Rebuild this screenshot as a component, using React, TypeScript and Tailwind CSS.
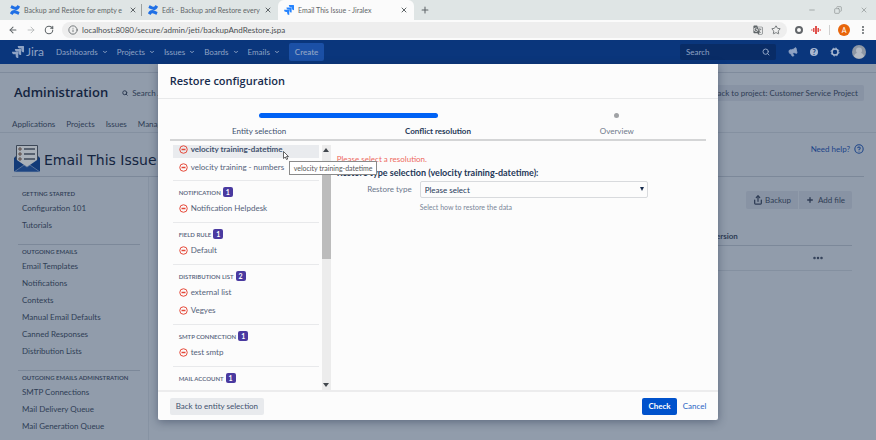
import {
  ArrowLeft,
  ArrowRight,
  ChevronDown,
  CircleHelp,
  Copy,
  Ellipsis,
  EllipsisVertical,
  Info,
  Megaphone,
  Minus,
  Plus,
  RotateCw,
  Search,
  Share,
  Star,
  X,
} from "lucide-react";
import { SiConfluence, SiJira } from "react-icons/si";
import { MdGTranslate } from "react-icons/md";

const tabs = [
  { title: "Backup and Restore for empty e", active: false },
  { title: "Edit - Backup and Restore every", active: false },
  { title: "Email This Issue - Jiralex", active: true },
];

const sidebar = [
  { heading: "GETTING STARTED", links: ["Configuration 101", "Tutorials"] },
  {
    heading: "OUTGOING EMAILS",
    links: [
      "Email Templates",
      "Notifications",
      "Contexts",
      "Manual Email Defaults",
      "Canned Responses",
      "Distribution Lists",
    ],
  },
  {
    heading: "OUTGOING EMAILS ADMINSTRATION",
    links: ["SMTP Connections", "Mail Delivery Queue", "Mail Generation Queue"],
  },
];

const entityGroups = [
  { heading: "NOTIFICATION", items: ["Notification Helpdesk"] },
  { heading: "FIELD RULE", items: ["Default"] },
  { heading: "DISTRIBUTION LIST", items: ["external list", "Vegyes"] },
  { heading: "SMTP CONNECTION", items: ["test smtp"] },
  { heading: "MAIL ACCOUNT", items: [""] },
];

const BrowserChrome = () => (
  <div className="shrink-0 bg-[#dfe5e5] text-[#5f6568]">
    <div className="flex h-5 items-stretch">
      {tabs.map((tab, index) => (
        <div
          key={tab.title}
          className={
            tab.active
              ? "flex w-[136px] items-center gap-1 rounded-t-md bg-[#fbfbfb] px-1.5"
              : "flex w-[136px] items-center gap-1 pr-1.5 pl-1.5 first:w-[142px] first:pr-0 first:pl-2.5"
          }
        >
          {tab.active ? (
            <SiJira className="size-2.5 shrink-0 text-[#2684ff]" />
          ) : (
            <SiConfluence className="size-2.5 shrink-0 text-[#1f6fe5]" />
          )}
          <span className="min-w-0 flex-1 text-[7px] whitespace-nowrap">{tab.title}</span>
          <button aria-label="Close tab">
            <X className="size-2" strokeWidth={3} />
          </button>
          {index === 0 && <span className="h-3 w-px bg-[#9aa0a0]" />}
        </div>
      ))}
      <button aria-label="New tab" className="px-1.5">
        <Plus className="size-2.5" strokeWidth={2.5} />
      </button>
      <div className="ml-auto flex items-center gap-4.5 pr-2 text-[#8a9090]">
        <button aria-label="Minimize"><Minus className="size-2" /></button>
        <button aria-label="Restore window"><Copy className="size-2 -scale-x-100" /></button>
        <button aria-label="Close window"><X className="size-2" /></button>
      </div>
    </div>
    <div className="flex h-5 items-center gap-2 bg-[#fbfbfb] px-2">
      <button aria-label="Back"><ArrowLeft className="size-2.5" strokeWidth={2.5} /></button>
      <button aria-label="Forward" className="text-[#b0b3b5]"><ArrowRight className="size-2.5" /></button>
      <button aria-label="Reload"><RotateCw className="size-2.5" strokeWidth={2.5} /></button>
      <div className="flex h-4 flex-1 items-center gap-1 rounded-full bg-[#eeeeee] px-1.5">
        <Info className="size-2.5" />
        <input
          aria-label="Address"
          defaultValue="localhost:8080/secure/admin/jeti/backupAndRestore.jspa"
          className="min-w-0 flex-1 bg-transparent text-[8px] text-[#4a4f52] outline-none"
        />
        <MdGTranslate className="mr-1 size-2.5" />
        <Star className="size-2.5" />
      </div>
      <span className="size-2 rounded-full border-2 border-[#62666a]" />
      <svg viewBox="0 0 20 16" className="h-2 w-2.5" fill="#e0504b">
        <path d="M0 7h3v2H0ZM4 4h3v8H4ZM8 0h4v16H8ZM13 4h3v8h-3ZM17 7h3v2h-3Z" />
      </svg>
      <span className="h-2.5 w-px bg-[#d0d0d0]" />
      <span className="flex size-3 items-center justify-center rounded-full bg-[#e8660c] text-[7px] text-white">
        A
      </span>
      <button aria-label="Browser menu"><EllipsisVertical className="size-2.5" strokeWidth={3} /></button>
    </div>
  </div>
);

const JiraHeader = () => (
  <header className="flex h-6 shrink-0 items-center bg-[#0a367c] pr-2.5 pl-3 text-[#8fa3c4]">
    <a href="#" className="flex items-center gap-0.5 text-[12px]">
      <SiJira className="size-3" />
      Jira
    </a>
    <nav className="ml-3 flex items-center gap-[9px]">
      {["Dashboards", "Projects", "Issues", "Boards", "Emails"].map((name) => (
        <button key={name} className="flex items-center gap-1 text-[8px]">
          {name}
          <ChevronDown className="size-1.5" strokeWidth={4} />
        </button>
      ))}
      <button className="h-[18px] rounded-xs bg-[#1b50a6] px-1.5 text-[8px] font-semibold">
        Create
      </button>
    </nav>
    <div className="ml-auto flex items-center gap-3">
      <label className="flex h-4 w-24 items-center rounded-xs bg-[#092c66] px-1.5">
        <input
          aria-label="Search"
          placeholder="Search"
          className="min-w-0 flex-1 bg-transparent text-[8px] outline-none placeholder:text-[#8fa3c4]"
        />
        <Search className="size-2" strokeWidth={3} />
      </label>
      <button aria-label="Feedback">
        <Megaphone className="size-2.5 -rotate-12 fill-current" />
      </button>
      <button
        aria-label="Help"
        className="flex size-2 items-center justify-center rounded-full bg-[#a9b8d0] text-[7px] font-bold text-[#0a367c]"
      >
        ?
      </button>
      <button aria-label="Settings">
        <svg viewBox="0 0 20 20" className="size-2.5" fill="none" stroke="#a9b8d0">
          <circle cx="10" cy="10" r="6" strokeWidth="3" />
          <circle cx="10" cy="10" r="8" strokeWidth="2" strokeDasharray="3.140 3.140" />
        </svg>
      </button>
      <button aria-label="Profile">
        <svg viewBox="0 0 28 28" className="size-3.5">
          <circle cx="14" cy="14" r="14" fill="#8e97a5" />
          <circle cx="14" cy="11" r="6" fill="#b4bac4" />
          <path d="M4 23a10 8 0 0 1 20 0 14 14 0 0 1-20 0Z" fill="#b4bac4" />
        </svg>
      </button>
    </div>
  </header>
);

const EnvelopeLogo = () => (
  <svg viewBox="0 0 26 28" className="h-7 w-[26px]">
    <path d="M0 13 4 9v10h18V9l4 4v14H0Z" fill="#173a70" />
    <path d="M2.500.5h21V18L13 26 2.500 18Z" fill="#a9b0b8" stroke="#3c4757" />
    <path d="M5 3h2v2H5ZM5 8h2v2H5ZM5 13h2v2H5Z" fill="none" stroke="#5b4a45" />
    <path d="M10 4h11M10 9h11M10 14h11" stroke="#3c4757" strokeWidth="1.500" />
    <path d="M0 13v14h26V13L13 22Z" fill="#123a78" />
    <path d="m0 27 10-7 3 2 3-2 10 7Z" fill="#1d4583" stroke="#8593aa" strokeWidth=".6" />
  </svg>
);

const AdminPage = () => (
  <div className="flex min-h-0 flex-1 flex-col overflow-hidden bg-[#919cab] text-[#2f3d55]">
    <div className="h-[9px] shrink-0 border-b border-[#7f8b9c]" />
    <div className="flex h-10 shrink-0 items-center pr-3 pl-3.5">
      <h1 className="font-['Open_Sans'] text-[13px] font-semibold text-[#14243f]">Administration</h1>
      <button className="ml-3.5 flex items-center gap-1 text-[8px]">
        <Search className="size-1.5" strokeWidth={4} />
        Search Jira admin
      </button>
      <button className="ml-auto h-4 rounded-xs bg-[#8893a4] px-1.5 text-[8px]">
        Back to project: Customer Service Project
      </button>
    </div>
    <nav className="flex h-5 shrink-0 items-center gap-[11px] border-b border-[#8490a0] pt-0.5 pl-3 text-[8px]">
      {["Applications", "Projects", "Issues", "Manage apps"].map((name) => (
        <a key={name} href="#">{name}</a>
      ))}
    </nav>
    <div className="mx-3 flex h-11 shrink-0 items-center gap-1 border-b border-[#7c8899] pt-2 pl-0.5">
      <EnvelopeLogo />
      <h2 className="pt-1 font-['DejaVu_Sans'] text-[14px] text-[#14243f]">Email This Issue</h2>
      <a href="#" className="ml-auto flex items-center gap-1 self-start pt-0.5 text-[8px] text-[#1c4489]">
        Need help?
        <CircleHelp className="size-2.5" strokeWidth={2.5} />
      </a>
    </div>
    <div className="flex min-h-0 flex-1 pr-6">
      <aside className="w-[149px] shrink-0 border-r border-[#8793a3] pt-2 pr-2 pl-4.5">
        {sidebar.map((group, index) => (
          <div
            key={group.heading}
            className={index > 0 ? "border-t border-[#7c8899] pb-2.5 pl-1" : "pt-0.5 pb-2.5 pl-1"}
          >
            <h3 className="text-[6px] leading-[13px] font-semibold whitespace-nowrap">{group.heading}</h3>
            {group.links.map((link) => (
              <a key={link} href="#" className="block text-[8px] leading-[17px]">{link}</a>
            ))}
          </div>
        ))}
      </aside>
      <main className="flex-1 pt-3.5 pl-4">
        <div className="flex justify-end gap-px">
          <button className="flex h-[18px] items-center gap-0.5 rounded-l-xs bg-[#8893a4] px-[7px] text-[8px]">
            <Share className="size-2.5" strokeWidth={3} />
            Backup
          </button>
          <button className="flex h-[18px] items-center gap-1 rounded-r-xs bg-[#8893a4] px-[7px] text-[8px]">
            <Plus className="size-2" strokeWidth={4} />
            Add file
          </button>
        </div>
        <table className="mt-4.5 w-full table-fixed text-left text-[8px]">
          <thead>
            <tr className="h-[18px] border-b border-[#7c8899]">
              <th />
              <th className="w-[141px]">Version</th>
            </tr>
          </thead>
          <tbody>
            <tr className="h-[25px] border-b border-[#8490a0]">
              <td />
              <td>
                <button aria-label="Row actions" className="ml-auto block pr-7">
                  <Ellipsis className="size-3" strokeWidth={3} />
                </button>
              </td>
            </tr>
          </tbody>
        </table>
      </main>
    </div>
  </div>
);

const EntityRow = ({ name, selected = false }: { name: string; selected?: boolean }) => (
  <button
    className={
      selected
        ? "flex h-[18px] w-full items-center gap-[3px] bg-[#e9ebee] pl-1.5 text-[8px] font-bold text-[#42526e]"
        : "flex h-[18px] w-full items-center gap-[3px] pl-1.5 text-[8px] text-[#54627a]"
    }
  >
    <svg viewBox="0 0 18 18" className="size-[9px] shrink-0" fill="none" stroke="#e5493a" strokeWidth="2">
      <circle cx="9" cy="9" r="7.500" />
      <path d="M5 9h8" strokeWidth="3" />
    </svg>
    {name}
  </button>
);

const EntityList = () => (
  <div className="relative flex w-[158px] shrink-0 gap-[3px]">
    <div className="h-full min-w-0 flex-1 overflow-hidden">
      <div className="-mt-[5px] pb-1">
        <EntityRow name="velocity training-datetime" selected />
        <EntityRow name="velocity training - numbers" />
      </div>
      {entityGroups.map((group) => (
        <div key={group.heading} className="border-t border-[#e8e9eb] pt-1 pb-[5px]">
          <h3 className="flex h-3.5 items-center gap-0.5 pl-1.5 text-[6px] font-semibold text-[#54627a]">
            {group.heading}
            <span className="flex size-2.5 items-center justify-center rounded-xs bg-[#4a3aa0] text-[7px] font-bold text-white">
              {group.items.length}
            </span>
          </h3>
          {group.items.map((item) => (
            <EntityRow key={item} name={item} />
          ))}
        </div>
      ))}
    </div>
    <div className="flex h-full w-[9px] flex-col items-center bg-[#ececec] py-[3px]">
      <svg viewBox="0 0 6 4" className="h-1 w-1.5 shrink-0" fill="#42474d"><path d="M0 4h6L3 0Z" /></svg>
      <div className="mt-2.5 h-[97px] w-full bg-[#bcbcbc]" />
      <svg viewBox="0 0 6 4" className="mt-auto h-1 w-1.5 shrink-0" fill="#42474d"><path d="M0 0h6L3 4Z" /></svg>
    </div>
    <span
      role="tooltip"
      className="absolute top-4 left-[116px] z-10 flex h-3.5 items-center border border-[#8a8a8a] bg-white px-1 text-[7px] whitespace-nowrap text-[#575757]"
    >
      velocity training-datetime
    </span>
    <svg viewBox="0 0 12 18" className="absolute top-1.5 left-[110px] z-20 h-[9px] w-1.5">
      <path d="M1 1v14l3.500-3 2.500 5 2.500-1-2.500-5H11Z" fill="#fff" stroke="#333" strokeWidth="1.500" />
    </svg>
  </div>
);

const RestoreDialog = () => (
  <div
    role="dialog"
    aria-labelledby="restore-title"
    className="absolute top-16 bottom-5 left-[18%] flex w-[64%] flex-col rounded-b-xs bg-[#fcfcfc] text-[#42526e] shadow-[0_2px_10px_rgba(30,45,70,0.45)]"
  >
    <div className="flex h-[35px] shrink-0 items-center border-b border-[#e8e9ea] px-3">
      <h2 id="restore-title" className="font-['Open_Sans'] text-[11px] font-semibold text-[#172b4d]">
        Restore configuration
      </h2>
    </div>
    <div className="flex min-h-0 flex-1 flex-col px-3 pt-3.5">
      <div className="grid h-1 shrink-0 grid-cols-6 items-center">
        <div className="col-span-2 col-start-2 h-[5px] rounded-full bg-[#0062f5]" />
        <div className="col-span-2 col-start-5 size-[5px] justify-self-center rounded-full bg-[#a0a2a5]" />
      </div>
      <div className="grid h-6 shrink-0 grid-cols-3 items-end border-b-2 border-[#d4d5d6] text-center text-[8px] leading-4">
        <span>Entity selection</span>
        <span className="font-bold text-[#253858]">Conflict resolution</span>
        <span className="text-[#707a8a]">Overview</span>
      </div>
      <div className="flex min-h-0 flex-1 gap-1.5 pt-1 pl-[3px]">
        <EntityList />
        <form className="flex-1 pt-[7px] text-[8px]">
          <p className="leading-[14px] text-[#ee6a60]">Please select a resolution.</p>
          <h3 className="text-[9px] leading-[14px] font-bold text-[#253858]">
            Restore type selection (velocity training-datetime):
          </h3>
          <div className="grid grid-cols-[75px_228px] gap-x-2 pt-px">
            <label htmlFor="restore-type" className="text-right leading-4 text-[#6b778c]">
              Restore type
            </label>
            <span className="relative">
              <select
                id="restore-type"
                className="block h-[17px] w-full appearance-none rounded-xs border border-[#d8dadd] bg-[#fcfcfc] px-1 text-[8px] text-[#253858]"
              >
                <option>Please select</option>
              </select>
              <svg viewBox="0 0 4 4" className="pointer-events-none absolute top-1.5 right-1 size-1" fill="#172b4d">
                <path d="M0 0h4L2 4Z" />
              </svg>
            </span>
            <p className="col-start-2 pt-0.5 text-[7px] leading-[14px] text-[#7a8598]">
              Select how to restore the data
            </p>
          </div>
        </form>
      </div>
    </div>
    <div className="flex h-[30px] shrink-0 items-center border-t-2 border-[#ececed] px-3 text-[8px]">
      <button className="h-[17px] rounded-xs bg-[#e8eaed] px-1.5">Back to entity selection</button>
      <button className="ml-auto h-[17px] rounded-xs bg-[#0052cc] px-1.5 font-bold text-white">
        Check
      </button>
      <button className="ml-1.5 text-[#2a66c4]">Cancel</button>
    </div>
  </div>
);

export default function App() {
  return (
    <div className="relative flex h-screen flex-col overflow-hidden font-['Lato','Open_Sans',sans-serif]">
      <BrowserChrome />
      <JiraHeader />
      <AdminPage />
      <RestoreDialog />
    </div>
  );
}
